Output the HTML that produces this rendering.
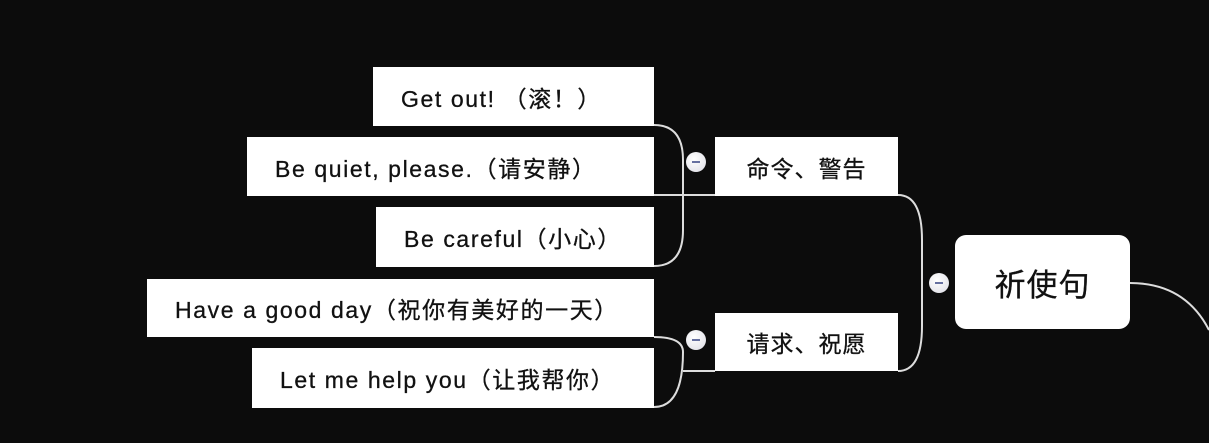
<!DOCTYPE html>
<html><head><meta charset="utf-8"><style>
body{margin:0;width:1209px;height:443px;background:#0c0c0c;position:relative;overflow:hidden;font-family:"Liberation Sans","Noto Sans CJK SC",sans-serif;}
.b{position:absolute;background:#fff;color:#111;font-size:23px;letter-spacing:1.6px;display:flex;align-items:center;padding-left:28px;box-sizing:border-box;white-space:nowrap;-webkit-text-stroke:0.3px #111;}
.c{justify-content:center;padding-left:0;font-size:23px;letter-spacing:1px;}
.m{position:absolute;width:20px;height:20px;border-radius:50%;background:radial-gradient(circle at 40% 35%,#fff,#dcdce4);}
.m:after{content:"";position:absolute;left:6px;top:9px;width:8px;height:2px;background:#6670a0;}
</style></head><body>
<svg width="1209" height="443" style="position:absolute;left:0;top:0" fill="none" stroke="#ddd" stroke-width="2">
<path d="M654 125 Q683 125 683 160 L683 230 Q683 266 654 266"/>
<path d="M654 195 L715 195"/>
<path d="M654 337 Q683 337 683 352 Q683 407 654 407"/>
<path d="M683 371 L715 371"/>
<path d="M898 195 Q922 195 922 240 L922 326 Q922 371 898 371"/>
<path d="M1130 283 Q1185 283 1209 330"/>
</svg>
<div class="b" style="left:373px;top:67px;width:281px;height:59px">Get out!&nbsp;（滚！）</div>
<div class="b" style="left:247px;top:137px;width:407px;height:59px">Be quiet, please.（请安静）</div>
<div class="b" style="left:376px;top:207px;width:278px;height:60px">Be careful（小心）</div>
<div class="b" style="left:147px;top:279px;width:507px;height:58px">Have a good day（祝你有美好的一天）</div>
<div class="b" style="left:252px;top:348px;width:402px;height:60px">Let me help you（让我帮你）</div>
<div class="b c" style="left:715px;top:137px;width:183px;height:59px">命令、警告</div>
<div class="b c" style="left:715px;top:313px;width:183px;height:58px">请求、祝愿</div>
<div class="b c" style="left:955px;top:235px;width:175px;height:94px;border-radius:11px;font-size:31px">祈使句</div>
<div class="m" style="left:686px;top:152px"></div>
<div class="m" style="left:686px;top:330px"></div>
<div class="m" style="left:929px;top:273px"></div>
</body></html>
